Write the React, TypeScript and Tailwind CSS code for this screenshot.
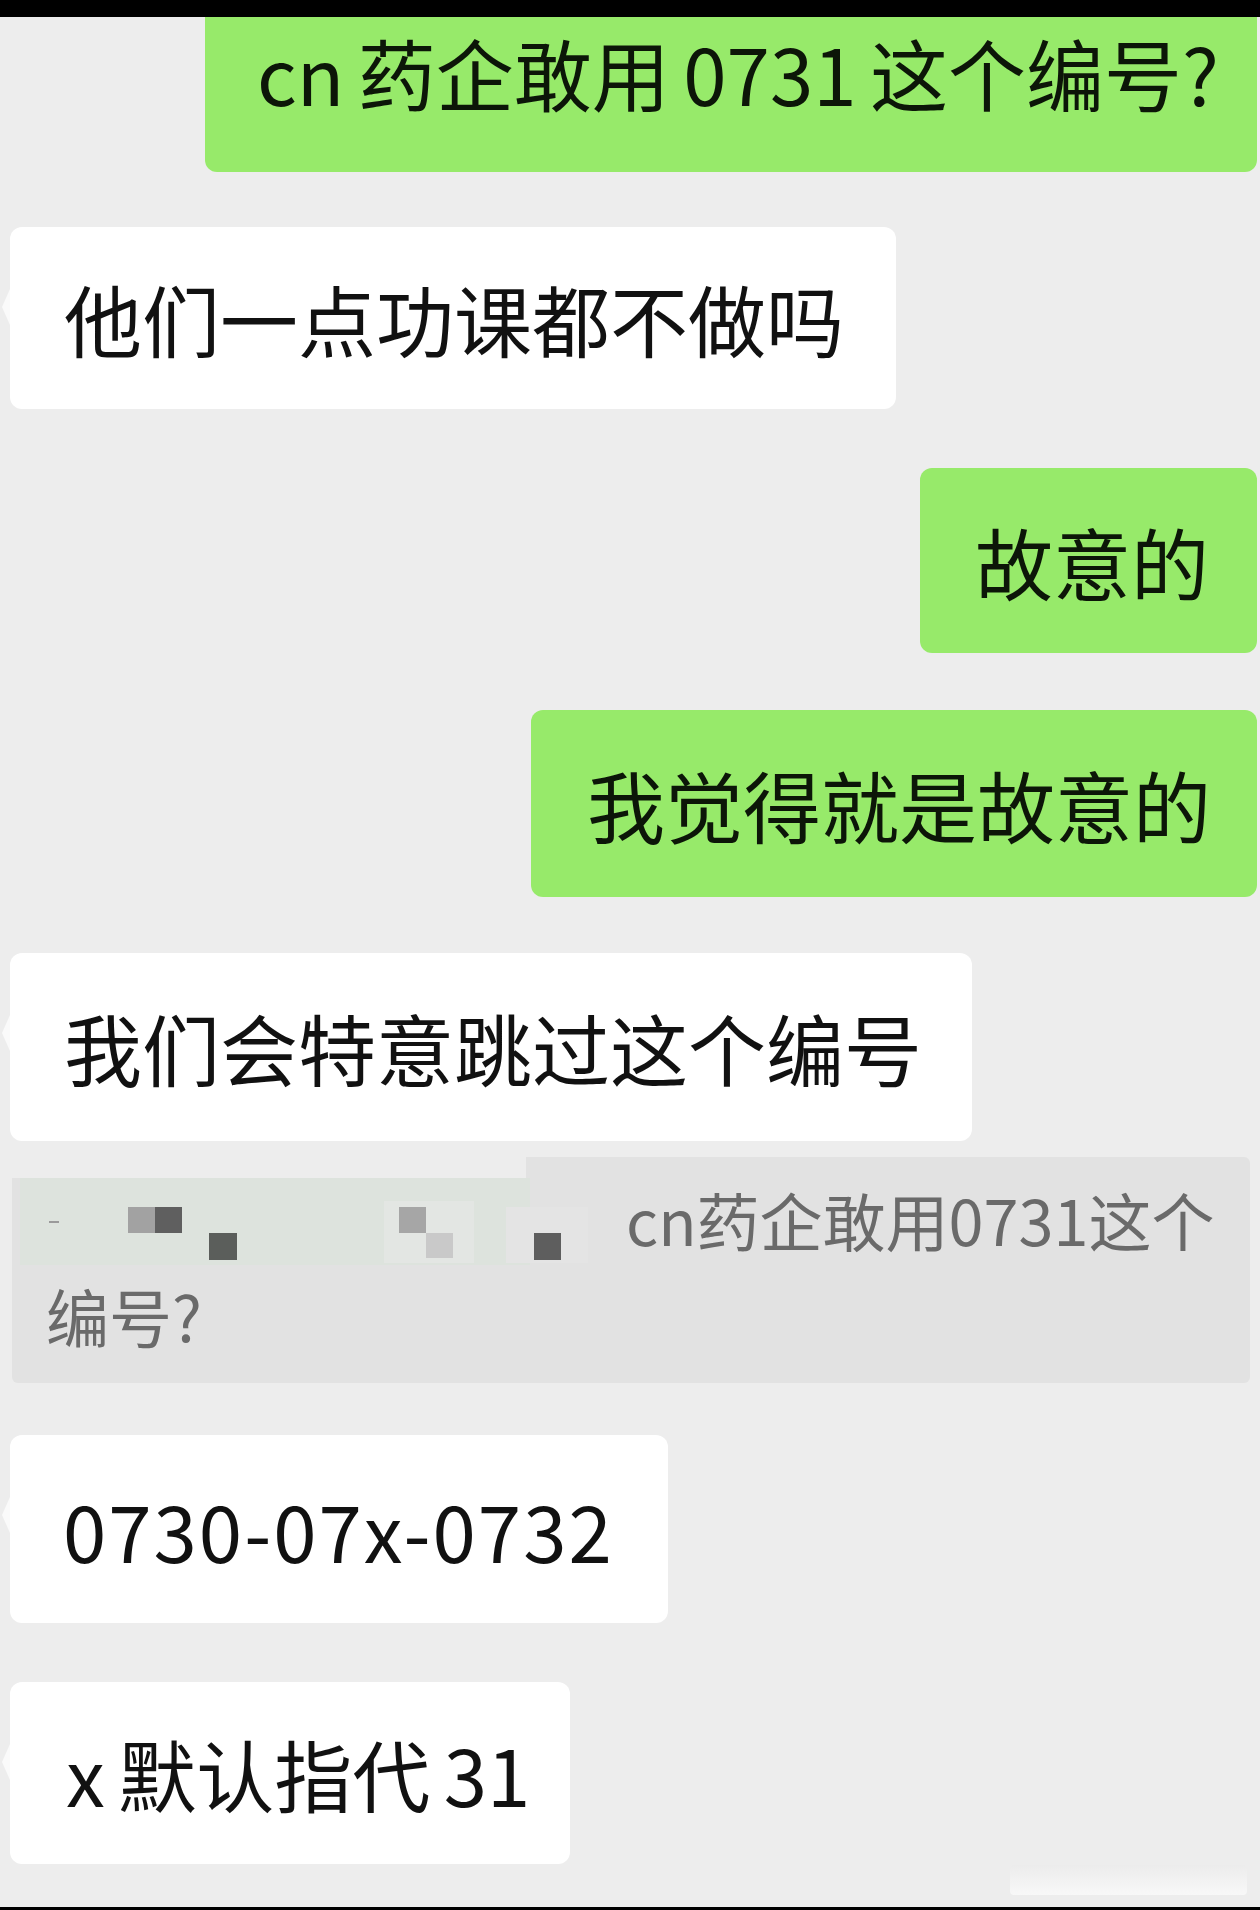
import React from "react"

const font = { fontFamily: '"Noto Sans CJK SC", "Noto Sans", sans-serif' }

function Tail() {
  return (
    <div className="absolute left-[-8px] top-[62px] w-0 h-0 border-y-[18px] border-y-transparent border-r-[8px] border-r-[#fafafa]" />
  )
}

function Left({ text, w, h, pl, mt, extra = "" }: { text: string; w: string; h: string; pl: string; mt: string; extra?: string }) {
  return (
    <div className={`flex ${mt}`}>
      <div className={`relative ml-[10px] bg-white rounded-[12px] flex items-center ${w} ${h} ${pl}`}>
        <Tail />
        <span className={`text-[78px] leading-none text-[#111] whitespace-pre ${extra}`}>{text}</span>
      </div>
    </div>
  )
}

function Right({ text, w, h, pl, mt }: { text: string; w: string; h: string; pl: string; mt: string }) {
  return (
    <div className={`flex justify-end pr-[3px] ${mt}`}>
      <div className={`bg-[#97ea6a] rounded-[12px] flex items-center ${w} ${h} ${pl}`}>
        <span className="text-[78px] leading-none text-[#0c1608] whitespace-nowrap">{text}</span>
      </div>
    </div>
  )
}

function Quote() {
  return (
    <div className="flex mt-[16px]">
      <div className="relative ml-[12px] w-[1238px] h-[226px] bg-[#e2e2e2] rounded-[6px] pl-[34px] pt-[14px] text-[63px] leading-[96px] text-[#6a6a6a]">
        {/* blurred name area */}
        <div className="absolute left-0 top-0 w-[514px] h-[21px] bg-[#ededed]" />
        <div className="absolute left-[8px] top-[21px] w-[510px] h-[87px] bg-[#dde3dd]" />
        <div className="absolute left-[372px] top-[44px] w-[90px] h-[62px] bg-[#e3e6e3]" />
        <div className="absolute left-[494px] top-[50px] w-[82px] h-[56px] bg-[#e4e4e4]" />
        <div className="absolute left-[37px] top-[64px] w-[10px] h-[2px] bg-[#9a9a9a]" />
        <div className="absolute left-[116px] top-[50px] w-[27px] h-[26px] bg-[#a2a2a2]" />
        <div className="absolute left-[143px] top-[50px] w-[27px] h-[26px] bg-[#5f5f5f]" />
        <div className="absolute left-[197px] top-[76px] w-[28px] h-[27px] bg-[#5b5e5b]" />
        <div className="absolute left-[387px] top-[50px] w-[27px] h-[26px] bg-[#a6a6a6]" />
        <div className="absolute left-[414px] top-[76px] w-[27px] h-[25px] bg-[#c9c9c9]" />
        <div className="absolute left-[522px] top-[76px] w-[27px] h-[27px] bg-[#5e5e5e]" />
        <div className="relative pl-[580px] whitespace-nowrap">cn药企敢用0731这个</div>
        <div className="relative whitespace-nowrap">编号?</div>
      </div>
    </div>
  )
}

export default function App() {
  return (
    <div className="w-[1260px] h-[1910px] bg-[#ededed] flex flex-col overflow-hidden" style={font}>
      <div className="h-[17px] bg-black shrink-0" />
      <div className="flex justify-end pr-[3px]">
        <div className="bg-[#97ea6a] rounded-b-[12px] w-[1052px] h-[155px] flex items-center pl-[52px] pb-[46px]">
          <span className="text-[78px] leading-none text-[#0c1608] whitespace-nowrap [word-spacing:-4px]">cn 药企敢用 0731 这个编号?</span>
        </div>
      </div>
      <Left text="他们一点功课都不做吗" w="w-[886px]" h="h-[182px]" pl="pl-[54px]" mt="mt-[55px]" />
      <Right text="故意的" w="w-[337px]" h="h-[185px]" pl="pl-[55px]" mt="mt-[59px]" />
      <Right text="我觉得就是故意的" w="w-[726px]" h="h-[187px]" pl="pl-[56px]" mt="mt-[57px]" />
      <Left text="我们会特意跳过这个编号" w="w-[962px]" h="h-[188px]" pl="pl-[54px]" mt="mt-[56px]" />
      <Quote />
      <Left text="0730-07x-0732" w="w-[658px]" h="h-[188px]" pl="pl-[53px]" mt="mt-[52px]" extra="tracking-[2px]" />
      <Left text="x 默认指代 31" w="w-[560px]" h="h-[182px]" pl="pl-[56px]" mt="mt-[59px]" extra="[word-spacing:-4px]" />
      <div className="flex-1 flex justify-end items-end pr-[13px] pb-[12px]">
        <div className="w-[237px] h-[30px] bg-gradient-to-b from-[#ececec] to-[#f8f8f8] rounded-[4px]" />
      </div>
      <div className="h-[3px] bg-black shrink-0" />
    </div>
  )
}
